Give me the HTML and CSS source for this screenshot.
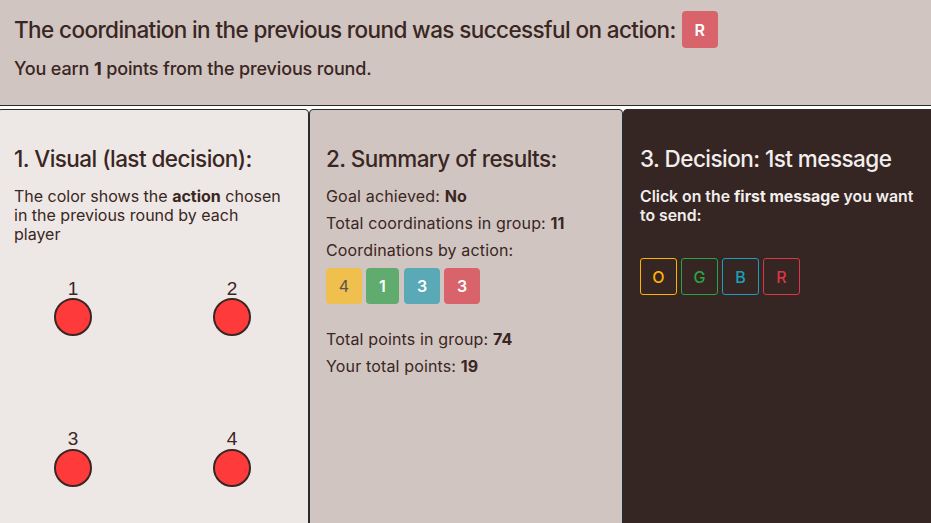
FILE: index.html
```html
<!DOCTYPE html>
<html>
<head>
<meta charset="utf-8">
<link rel="stylesheet" href="styles.css">
</head>
<body>
<header class="top">
  <h2 class="top-title">The coordination in the previous round was successful on action: <span class="badge badge-red">R</span></h2>
  <p class="top-sub">You earn <b>1</b> points from the previous round.</p>
</header>
<main class="cols">
  <section class="panel panel-visual">
    <h3 class="panel-title">1. Visual (last decision):</h3>
    <p class="panel-text narrow">The color shows the <b>action</b> chosen in the previous round by each player</p>
    <svg class="players" width="290" height="250" viewBox="0 0 290 250">
      <g font-family="Liberation Sans, Arial, sans-serif" font-size="19" fill="#3a2622" text-anchor="middle">
        <text x="59" y="36">1</text>
        <text x="218" y="36">2</text>
        <text x="59" y="186">3</text>
        <text x="218" y="186">4</text>
      </g>
      <g fill="#ff3a3a" stroke="#3a2622" stroke-width="2">
        <circle cx="59" cy="58" r="18"/>
        <circle cx="218" cy="58" r="18"/>
        <circle cx="59" cy="209" r="18"/>
        <circle cx="218" cy="209" r="18"/>
      </g>
    </svg>
  </section>
  <section class="panel panel-summary">
    <h3 class="panel-title">2. Summary of results:</h3>
    <p class="stat">Goal achieved: <b>No</b></p>
    <p class="stat">Total coordinations in group: <b>11</b></p>
    <p class="stat">Coordinations by action:</p>
    <div class="badges">
      <span class="badge badge-yellow">4</span>
      <span class="badge badge-green">1</span>
      <span class="badge badge-teal">3</span>
      <span class="badge badge-red">3</span>
    </div>
    <p class="stat stat-gap">Total points in group: <b>74</b></p>
    <p class="stat">Your total points: <b>19</b></p>
  </section>
  <section class="panel panel-decision">
    <h3 class="panel-title">3. Decision: 1st message</h3>
    <p class="panel-text strong">Click on the <b>first message</b> you want to send:</p>
    <div class="choices">
      <button class="choice choice-o">O</button>
      <button class="choice choice-g">G</button>
      <button class="choice choice-b">B</button>
      <button class="choice choice-r">R</button>
    </div>
  </section>
</main>
</body>
</html>
```

FILE: styles.css
```css
* { box-sizing: border-box; }
html, body {
  margin: 0;
  padding: 0;
  background: #ffffff;
  overflow: hidden;
}
body {
  width: 931px;
  height: 523px;
  font-family: Inter, "Noto Sans", sans-serif;
  color: #3a2622;
}
.top {
  background: #d0c5c1;
  height: 106px;
  border-bottom: 1px solid #2b2b2e;
  padding: 11px 14px 0;
}
.top-title {
  margin: 0;
  font-size: 22.5px;
  font-weight: 500;
  letter-spacing: -0.6px;
  display: flex;
  align-items: center;
  gap: 6px;
  height: 37px;
}
.top-sub {
  margin: 10px 0 0;
  font-size: 18px;
  font-weight: 500;
  letter-spacing: -0.15px;
}
.top-sub b { font-weight: 700; }
.badge {
  display: inline-flex;
  align-items: center;
  justify-content: center;
  width: 36px;
  height: 37px;
  border-radius: 4px;
  color: #fff;
  font-size: 16px;
  font-weight: 600;
  letter-spacing: 0;
}
.badge-red { background: #d9636b; }
.badge-yellow { background: #f0c04f; color: #5a5350; font-weight: 400; }
.badge-green { background: #60ac6e; width: 33px; }
.badge-teal { background: #5aa9b7; }
.cols {
  display: flex;
  margin-top: 3px;
  margin-left: -3px;
  height: 420px;
}
.panel {
  width: 312px;
  flex: none;
  border: 1px solid #2b2b2e;
  border-radius: 4px;
  padding: 35px 16px 0;
}
.panel-visual { background: #ede8e6; }
.panel-summary { background: #d0c5c1; width: 314px; }
.panel-decision { background: #352523; color: #f2eeec; }
.panel-title {
  margin: 0 0 14px;
  font-size: 22.5px;
  font-weight: 500;
  letter-spacing: -0.55px;
  line-height: 28px;
}
.panel-text {
  margin: 0;
  font-size: 16px;
  line-height: 19px;
  font-weight: 400;
}
.panel-text.narrow { max-width: 272px; }
.panel-text b { font-weight: 700; }
.panel-text.strong { font-weight: 600; font-size: 15.8px; }
.players { display: block; margin-top: 15px; }
.stat {
  margin: 0 0 8px;
  font-size: 16px;
  line-height: 19px;
  letter-spacing: 0.15px;
}
.stat b { font-weight: 700; }
.badges {
  display: flex;
  gap: 4px;
  margin-top: 8px;
}
.badges .badge { height: 36px; font-size: 16px; }
.badges .badge-green { width: 33px; }
.badges .badge-teal { margin-left: 1px; }
.stat-gap { margin-top: 26px; }
.choices {
  display: flex;
  gap: 4px;
  margin-top: 33px;
}
.choice {
  width: 37px;
  height: 37px;
  padding: 0;
  background: transparent;
  border: 1px solid;
  border-radius: 3px;
  font-family: Inter, "Noto Sans", sans-serif;
  font-size: 16px;
  font-weight: 500;
}
.choice-o { color: #ffb300; border-color: #ffb300; }
.choice-g { color: #2aa443; border-color: #2aa443; }
.choice-b { color: #1aa0b8; border-color: #1aa0b8; }
.choice-r { color: #dc3545; border-color: #dc3545; }
```
